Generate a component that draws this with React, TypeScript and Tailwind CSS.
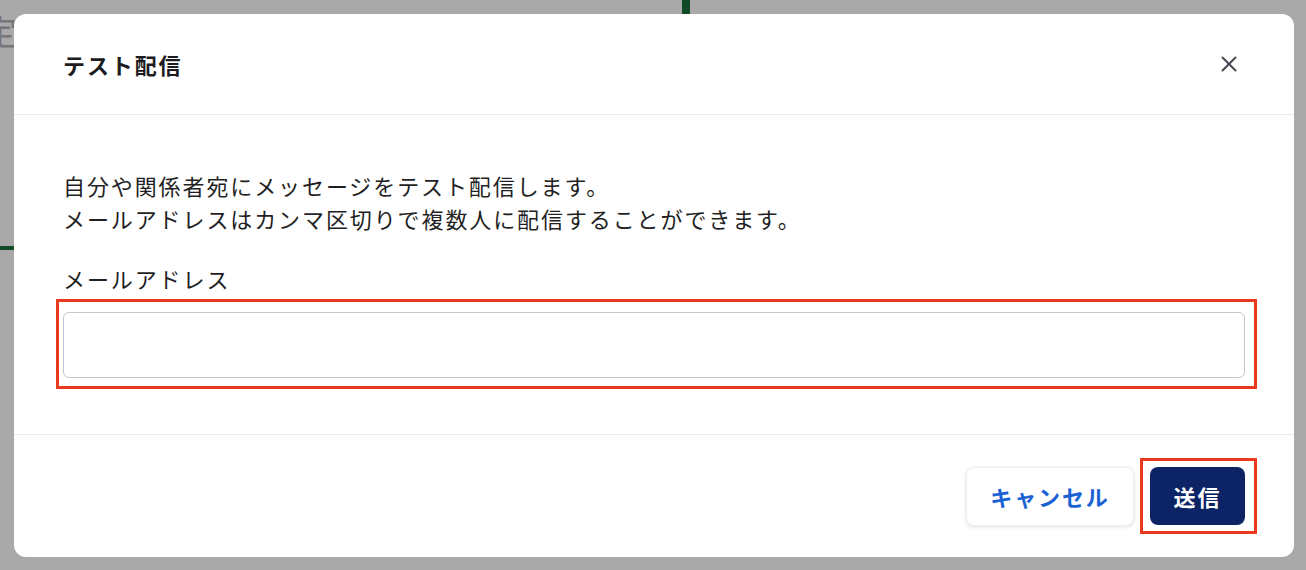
import { X } from 'lucide-react';

const font = { fontFamily: '"Noto Sans CJK JP", "Noto Sans", sans-serif' };

export default function App() {
    return (
        <div className="relative w-[1306px] h-[570px] overflow-hidden bg-[#a9a9aa] p-[14px]" style={font}>
            {/* page behind the overlay */}
            <div className="absolute left-[-17px] top-[14px] text-[34px] leading-none text-[#75757a]">定</div>
            <div className="absolute left-0 top-[246px] w-[14px] h-[4px] bg-[#114a27]"></div>
            <div className="absolute left-[682px] top-0 w-[8px] h-[14px] bg-[#114a27]"></div>

            {/* Modal */}
            <div className="relative w-[1280px] h-[543px] bg-white rounded-[12px] flex flex-col">
                <div className="h-[101px] shrink-0 flex items-center justify-between pl-[49px] pr-[52px] border-b border-[#ececec]">
                    <h2 className="text-[22px] font-bold tracking-[1.9px] text-[#1b1b20]">テスト配信</h2>
                    <button className="text-[#4a4a55]">
                        <X size={26} strokeWidth={1.9} />
                    </button>
                </div>

                <div className="flex-1 px-[49px] pt-[54px] border-b border-[#ececec]">
                    <p className="text-[22px] leading-[33px] tracking-[1.9px] text-[#1f1f24]">
                        自分や関係者宛にメッセージをテスト配信します。
                        <br />
                        メールアドレスはカンマ区切りで複数人に配信することができます。
                    </p>
                    <label className="block mt-[27px] text-[22px] leading-[33px] tracking-[1.9px] text-[#1f1f24]">メールアドレス</label>
                    <div className="relative mt-[17px]">
                        <input
                            type="text"
                            className="block w-full h-[66px] px-4 border-[1.5px] border-[#c6c6cb] rounded-[6px] outline-none text-[20px]"
                        />
                        <div className="absolute left-[-7px] right-[-12px] top-[-13px] bottom-[-11px] border-[3px] border-[#ea3a1e] pointer-events-none"></div>
                    </div>
                </div>

                <div className="h-[122px] shrink-0 flex items-start justify-end gap-[16px] pt-[32px] pr-[49px]">
                    <button className="w-[168px] h-[59px] rounded-[8px] bg-white border border-[#efefef] shadow-[0_1px_4px_rgba(0,0,0,0.12)] text-[22px] font-bold tracking-[1.9px] text-[#1a62d4]">
                        キャンセル
                    </button>
                    <div className="relative">
                        <button className="w-[95px] h-[58px] rounded-[8px] bg-[#0c2466] text-[22px] font-bold tracking-[1.9px] text-white">
                            送信
                        </button>
                        <div className="absolute left-[-10px] right-[-12px] top-[-9px] bottom-[-9px] border-[3px] border-[#ea3a1e] pointer-events-none"></div>
                    </div>
                </div>
            </div>
        </div>
    );
}
